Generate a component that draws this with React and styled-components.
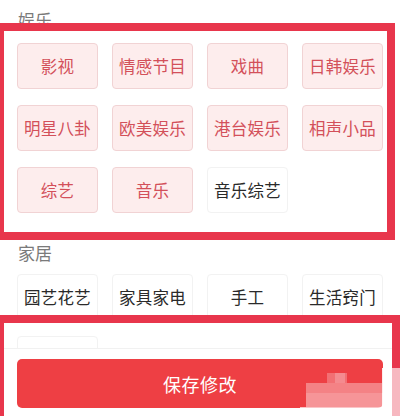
import React from "react";
import styled, { createGlobalStyle } from "styled-components";

const Global = createGlobalStyle`
  html, body { margin: 0; padding: 0; background: #fff; }
  body { font-family: "Noto Sans CJK SC", "Noto Sans", sans-serif; }
  * { box-sizing: border-box; }
`;

const Page = styled.div`
  position: relative;
  height: 416px;
  width: 400px;
  overflow: hidden;
  display: flex;
  flex-direction: column;
  background: #fff;
`;

const Scroll = styled.div`
  flex: 1;
  overflow: hidden;
  padding: 8px 0 0 17px;
`;

const Label = styled.div`
  font-size: 17px;
  line-height: 24px;
  height: 24px;
  color: #7a7a7a;
  padding-left: 1px;
  margin-top: ${(p) => p.$mt || 0}px;
  margin-bottom: ${(p) => p.$mb || 0}px;
`;

const Grid = styled.div`
  display: grid;
  grid-template-columns: repeat(4, 81px);
  grid-auto-rows: 46px;
  column-gap: 14px;
  row-gap: 16px;
`;

const Tile = styled.div`
  display: flex;
  align-items: center;
  justify-content: center;
  border-radius: 4px;
  font-size: 16.5px;
  letter-spacing: 0.3px;
  background: ${(p) => (p.$on ? "#fdeded" : "#fff")};
  border: 1px solid ${(p) => (p.$on ? "#f1d3d4" : "#f2f2f2")};
  color: ${(p) => (p.$on ? "#d3505a" : "#2a2a2a")};
`;

const Footer = styled.div`
  height: 68px;
  flex: none;
  background: #fff;
  border-top: 1px solid #f1f1f1;
  padding: 10px 17px 8px 17px;
`;

const SaveButton = styled.button`
  width: 366px;
  height: 49px;
  border: none;
  border-radius: 5px;
  background: #ee3f44;
  color: #fff;
  font-family: "Noto Sans CJK SC", sans-serif;
  font-size: 18px;
  letter-spacing: 0.5px;
  display: flex;
  align-items: center;
  justify-content: center;
`;

const Frame = styled.div`
  position: absolute;
  left: ${(p) => p.$x}px;
  top: ${(p) => p.$y}px;
  width: ${(p) => p.$w}px;
  height: ${(p) => p.$h}px;
  border: 8px solid #e8364c;
  pointer-events: none;
`;

const Mosaic = styled.svg`
  position: absolute;
  left: 300px;
  top: 368px;
  width: 100px;
  height: 48px;
  pointer-events: none;
`;

const fun = [
  ["影视", 1], ["情感节目", 1], ["戏曲", 1], ["日韩娱乐", 1],
  ["明星八卦", 1], ["欧美娱乐", 1], ["港台娱乐", 1], ["相声小品", 1],
  ["综艺", 1], ["音乐", 1], ["音乐综艺", 0],
];
const home = ["园艺花艺", "家具家电", "手工", "生活窍门", ""];

export default function App() {
  return (
    <>
      <Global />
      <Page>
        <Scroll>
          <Label $mb={11}>娱乐</Label>
          <Grid>
            {fun.map(([t, on]) => (
              <Tile key={t} $on={!!on}>{t}</Tile>
            ))}
          </Grid>
          <Label $mt={28} $mb={9}>家居</Label>
          <Grid>
            {home.map((t, i) => (
              <Tile key={i}>{t}</Tile>
            ))}
          </Grid>
        </Scroll>
        <Footer>
          <SaveButton>保存修改</SaveButton>
        </Footer>
        <Frame $x={-4} $y={23} $w={399} $h={217} />
        <Frame $x={-4} $y={315} $w={404} $h={130} />
        <Mosaic viewBox="0 0 100 48">
          <rect x="27" y="5" width="20" height="10" fill="#fff" opacity="0.25" />
          <rect x="35" y="5" width="10" height="10" fill="#fff" opacity="0.2" />
          <rect x="6" y="15" width="76" height="10" fill="#fff" opacity="0.35" />
          <rect x="6" y="25" width="80" height="14" fill="#fff" opacity="0.45" />
          <rect x="0" y="39" width="82" height="9" fill="#fff" opacity="0.7" />
          <rect x="82" y="0" width="8" height="48" fill="#fff" opacity="0.9" />
          <rect x="90" y="0" width="10" height="48" fill="#fff" opacity="0.65" />
        </Mosaic>
      </Page>
    </>
  );
}
